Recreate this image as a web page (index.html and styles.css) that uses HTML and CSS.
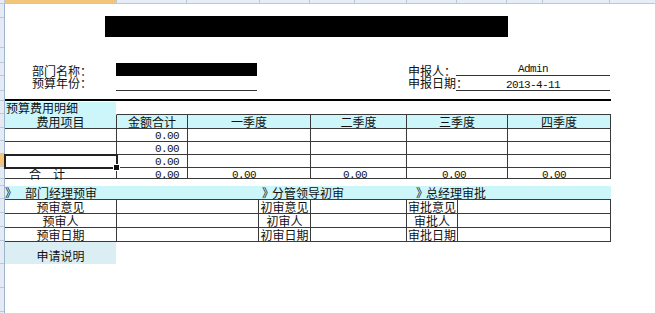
FILE: index.html
```html
<!DOCTYPE html>
<html lang="zh-CN">
<head>
<meta charset="utf-8">
<title>预算申请</title>
<link rel="stylesheet" href="styles.css">
</head>
<body>
<div class="colhdr">
  <span></span><span class="sel"></span><span></span><span></span><span></span><span></span><span></span><span></span><span></span><span></span><span></span><span class="last"></span>
</div>
<div class="sheet">
  <div class="rowhdr">
    <span></span><span></span><span></span><span></span><span></span><span></span><span></span><span></span><span></span><span></span><span class="sel"></span><span></span><span></span><span></span><span></span><span></span><span></span><span></span><span></span><span></span><span class="last"></span>
  </div>
  <div class="page">
    <div class="title"></div>

    <div class="info">
      <div class="lbl r1">部门名称：</div>
      <div class="redact"></div>
      <div></div>
      <div class="lbl r1">申报人：</div>
      <div class="val mono r1">Admin</div>

      <div class="lbl r2">预算年份：</div>
      <div class="val"></div>
      <div></div>
      <div class="lbl r2">申报日期：</div>
      <div class="val mono r2">2013-4-11</div>
    </div>

    <div class="rule"></div>
    <div class="caption">预算费用明细</div>

    <div class="budget">
      <div class="h first">费用项目</div>
      <div class="h">金额合计</div>
      <div class="h">一季度</div>
      <div class="h">二季度</div>
      <div class="h">三季度</div>
      <div class="h">四季度</div>

      <div></div><div class="num amt">0.00</div><div></div><div></div><div></div><div></div>
      <div></div><div class="num amt">0.00</div><div></div><div></div><div></div><div></div>
      <div class="selcell"></div><div class="num amt">0.00</div><div></div><div></div><div></div><div></div>

      <div class="total">合　计</div>
      <div class="num amt">0.00</div>
      <div class="num q1">0.00</div>
      <div class="num q2">0.00</div>
      <div class="num q3">0.00</div>
      <div class="num q4">0.00</div>
    </div>

    <div class="band">
      <div class="b1"><span class="arr a1">》</span>部门经理预审</div>
      <div class="b2"><span class="arr a2">》</span>分管领导初审</div>
      <div class="b3"><span class="arr a3">》</span>总经理审批</div>
    </div>

    <div class="approve">
      <div class="lab">预审意见</div><div></div><div class="lab">初审意见</div><div></div><div class="lab">审批意见</div><div></div>
      <div class="lab">预审人</div><div></div><div class="lab">初审人</div><div></div><div class="lab">审批人</div><div></div>
      <div class="lab">预审日期</div><div></div><div class="lab">初审日期</div><div></div><div class="lab">审批日期</div><div></div>
    </div>

    <div class="note">申请说明</div>
  </div>
</div>
</body>
</html>
```

FILE: styles.css
```css
* {
  box-sizing: border-box;
  margin: 0;
  padding: 0;
}

html, body {
  width: 655px;
  height: 313px;
  overflow: hidden;
  background: #fff;
}

body {
  font-family: "Noto Sans CJK SC", "Noto Sans", sans-serif;
  font-size: 12px;
  color: #111;
}

/* Excel column header strip */
.colhdr {
  display: grid;
  grid-template-columns: 5px 112px 70px 73px 50px 45px 52px 50px 50px 36px 67px 1fr;
  height: 4px;
  background: #e7edf6;
  border-bottom: 1px solid #b9c8db;
}
.colhdr span {
  border-right: 1px solid #b9c8db;
}
.colhdr span.last {
  border-right: 0;
}
.colhdr .sel {
  background: #f3c57a;
}

.sheet {
  display: flex;
  height: 309px;
}

/* Excel row header strip */
.rowhdr {
  width: 5px;
  flex: none;
  display: grid;
  grid-template-rows: 14px 30px 15px 13px 15px 10px 13px 14px 13px 13px 13px 12px 7px 13px 14px 14px 14px 23px 24px 24px 1fr;
  background: #e4ebf5;
  border-right: 1px solid #9fb3cb;
}
.rowhdr span {
  border-bottom: 1px solid #b9c8db;
}
.rowhdr span.last {
  border-bottom: 0;
}
.rowhdr .sel {
  background: #f3c57a;
}

.page {
  width: 606px;
  flex: none;
}

.title {
  margin: 12px 0 0 100px;
  width: 403px;
  height: 21px;
  background: #000;
}

.info {
  margin-top: 26px;
  padding-left: 27px;
  display: grid;
  grid-template-columns: 84px 141px 151px 48px 154px;
  grid-template-rows: 13px 15px;
}
.lbl {
  white-space: nowrap;
}
.lbl.r1 {
  line-height: 13px;
  padding-top: 1px;
}
.lbl.r2 {
  line-height: 14px;
}
.redact {
  background: #000;
}
.val {
  border-bottom: 1px solid #333;
  text-align: center;
}
.mono {
  font-family: "Liberation Mono", "DejaVu Sans Mono", monospace;
  font-size: 11px;
  letter-spacing: -0.6px;
}
.val.r1 {
  line-height: 13px;
}
.val.r2 {
  line-height: 14px;
  padding-top: 2px;
}

.rule {
  margin-top: 8px;
  height: 2px;
  background: #000;
}

.caption {
  margin-top: 1px;
  width: 111px;
  height: 12px;
  line-height: 12px;
  padding-left: 1px;
  background: #ccf6fa;
  white-space: nowrap;
}

/* budget table */
.budget {
  display: grid;
  grid-template-columns: 112px 71px 123px 96px 101px 103px;
  grid-template-rows: 15px 13px 13px 13px 11px;
}
.budget > div {
  border-right: 1px solid #3a3a3a;
  border-bottom: 1px solid #3a3a3a;
  line-height: 12px;
  white-space: nowrap;
}
.budget .h {
  border-top: 1px solid #3a3a3a;
  background: #ccf6fa;
  text-align: center;
  line-height: 13px;
}
.budget .h.first {
  border-top-color: #ccf6fa;
}
.budget .num {
  font-family: "Liberation Mono", "DejaVu Sans Mono", monospace;
  font-size: 11px;
  letter-spacing: -0.6px;
  line-height: 15px;
}
.budget .amt {
  text-align: right;
  padding-right: 8px;
}
.budget .q1 { padding-left: 44px; }
.budget .q2 { padding-left: 32px; }
.budget .q3 { padding-left: 35px; }
.budget .q4 { padding-left: 34px; }
.budget .total {
  padding-left: 24px;
  line-height: 11px;
}
.selcell {
  position: relative;
  z-index: 1;
  outline: 2px solid #222;
  outline-offset: -1px;
}
.selcell::after {
  content: "";
  position: absolute;
  right: -4px;
  bottom: -4px;
  width: 5px;
  height: 5px;
  background: #111;
  border: 1px solid #fff;
}

/* approval band */
.band {
  margin-top: 7px;
  height: 13px;
  display: grid;
  grid-template-columns: 254px 148px 204px;
  background: #ccf6fa;
  line-height: 13px;
  white-space: nowrap;
}
.arr {
  display: inline-block;
}
.a1 { width: 20px; }
.b2 { padding-left: 3px; }
.a2 { width: 10px; }
.b3 { padding-left: 9px; }
.a3 { width: 10px; }

.approve {
  display: grid;
  grid-template-columns: 112px 142px 52px 96px 51px 153px;
  grid-template-rows: 15px 14px 14px;
}
.approve > div {
  border-right: 1px solid #3a3a3a;
  border-bottom: 1px solid #3a3a3a;
  line-height: 13px;
  white-space: nowrap;
}
.approve > div:nth-child(-n+6) {
  border-top: 1px solid #3a3a3a;
}
.approve .lab {
  text-align: center;
}

.note {
  width: 111px;
  height: 22px;
  line-height: 22px;
  padding-top: 3px;
  text-align: center;
  background: #daeef3;
}
```
